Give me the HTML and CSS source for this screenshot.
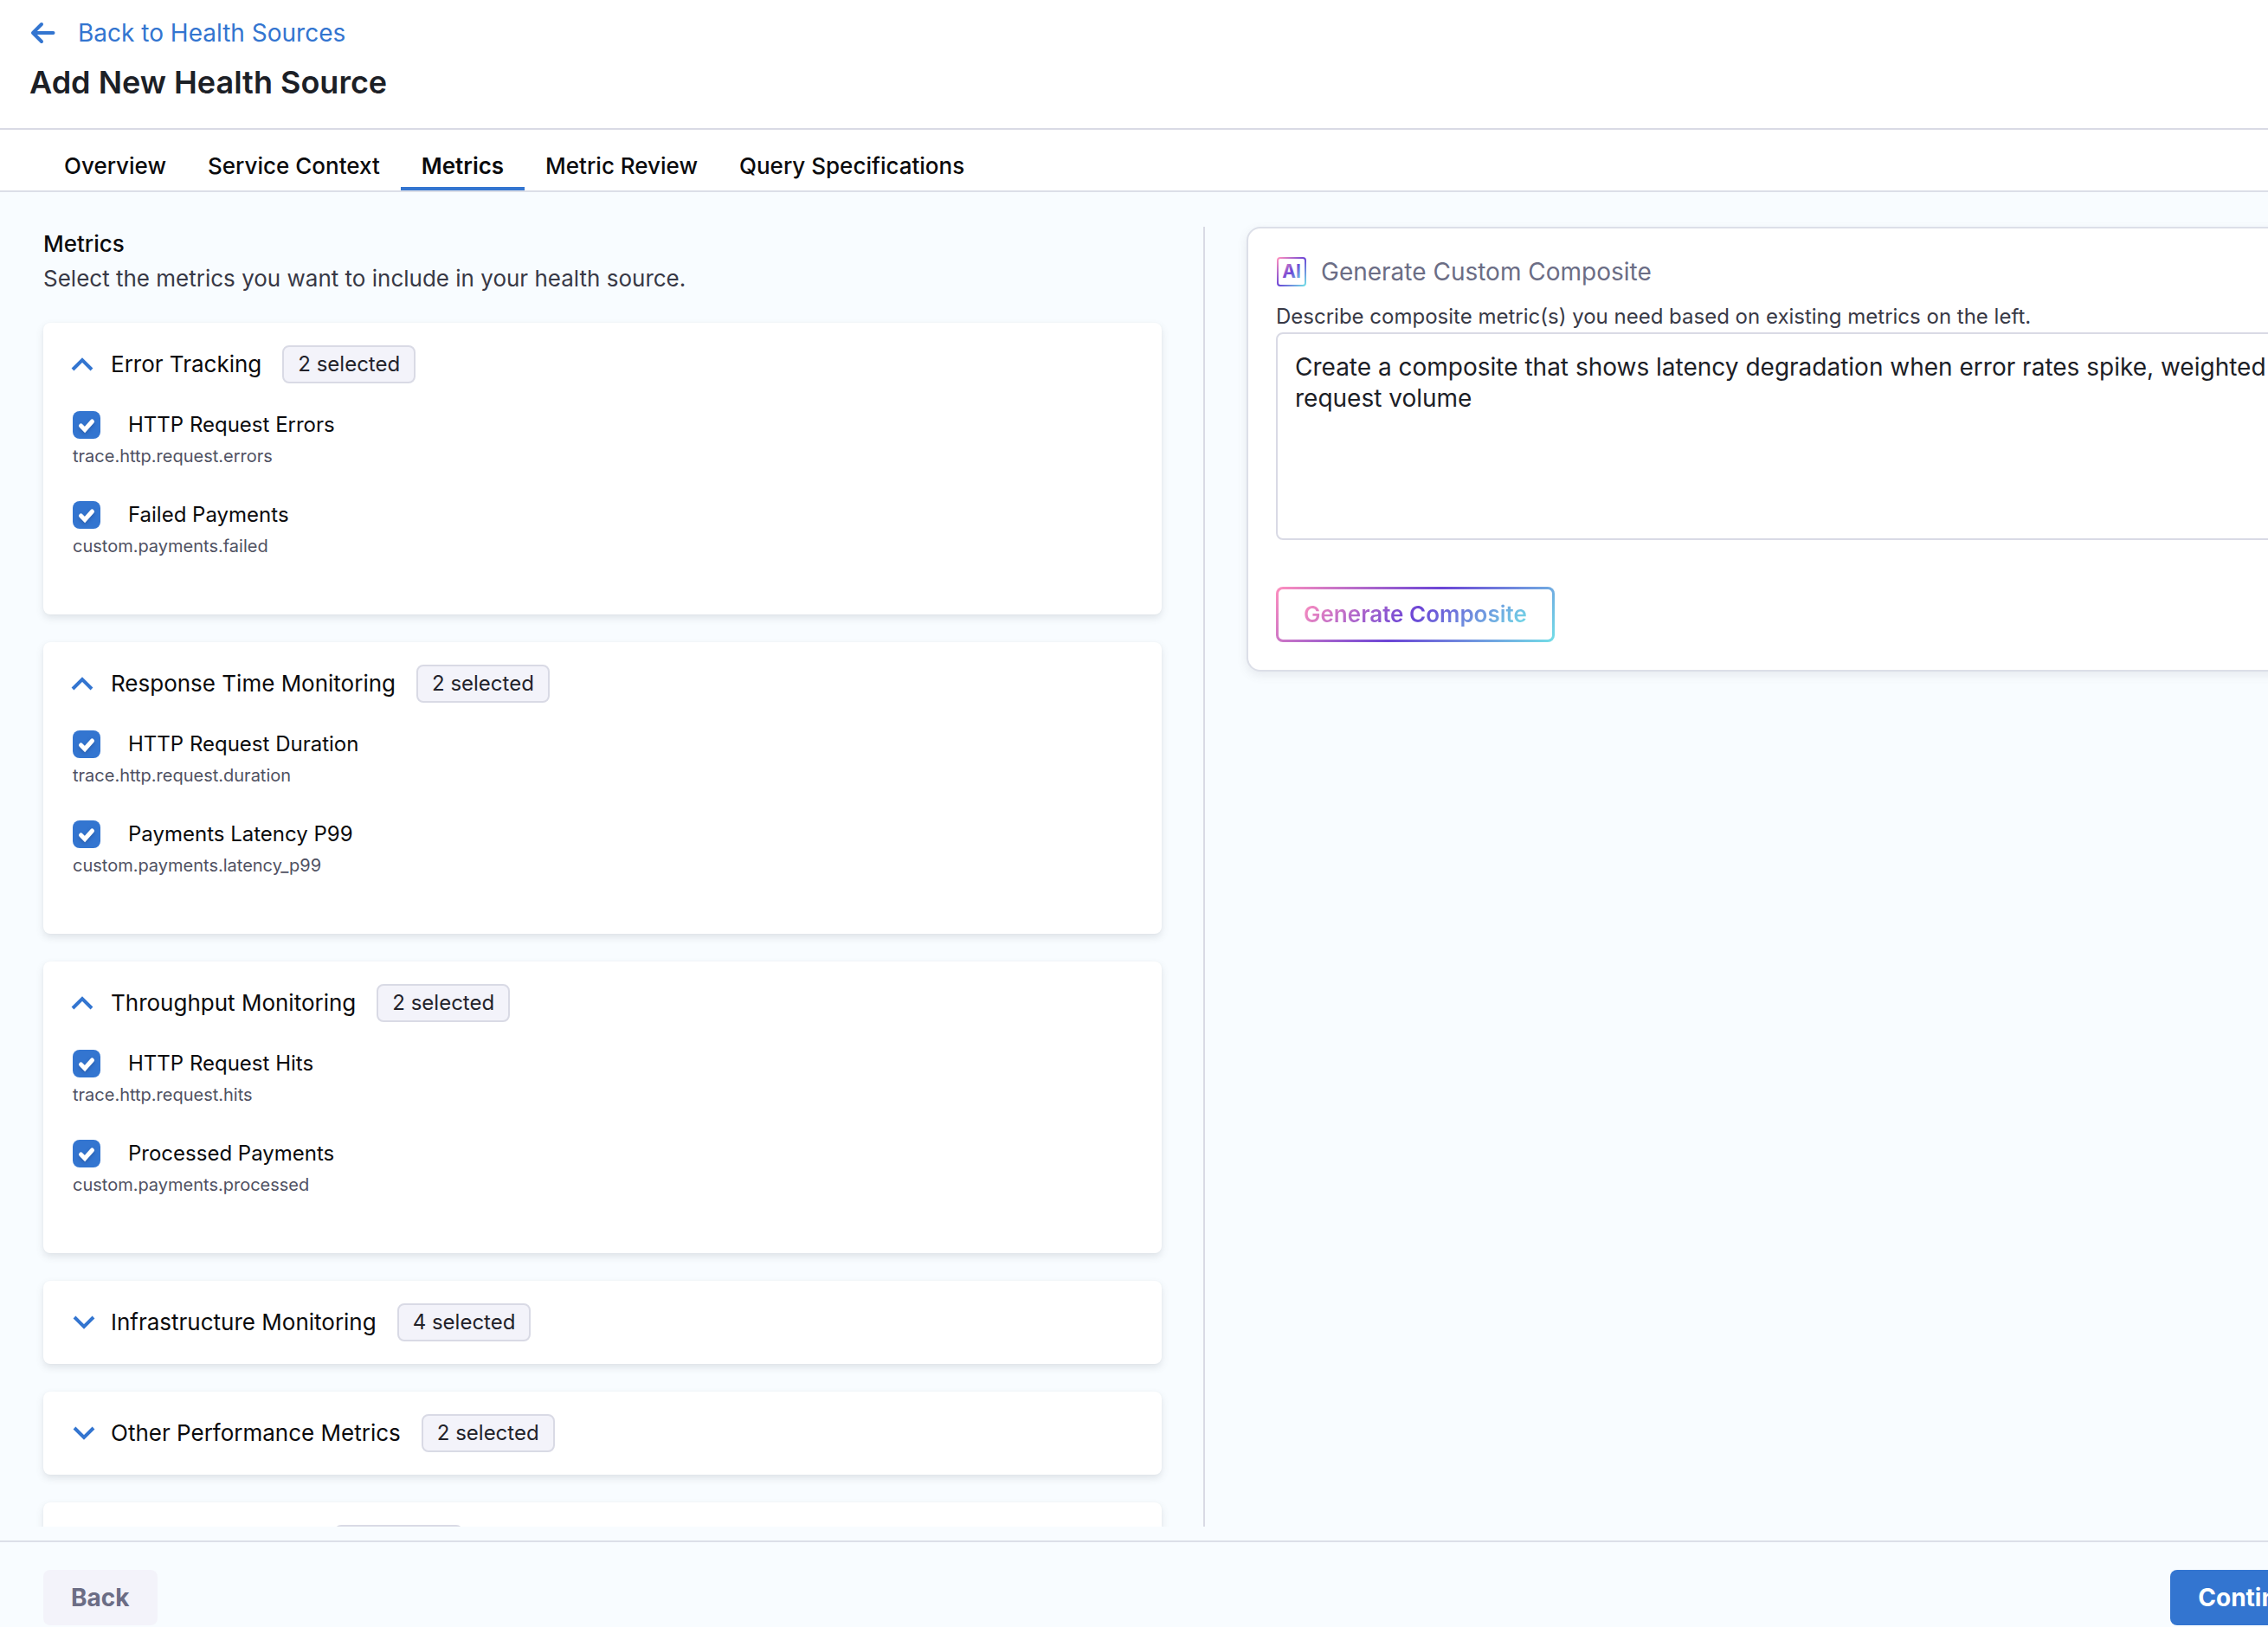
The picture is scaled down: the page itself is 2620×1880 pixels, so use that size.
FILE: index.html
```html
<!DOCTYPE html>
<html lang="en">
<head>
  <meta charset="UTF-8" />
  <meta name="viewport" content="width=device-width, initial-scale=1.0" />
  <title>Add New Health Source</title>
  <link rel="stylesheet" href="styles.css">
</head>
<body>
  <div class="page">

    <header class="page-header">
      <a class="back-link" href="#">
        <svg width="32" height="32" viewBox="0 0 32 32" fill="none" stroke="currentColor" stroke-width="4" stroke-linecap="round" stroke-linejoin="round" aria-hidden="true">
          <path d="M27.5 16H4.5M14 6L4 16L14 26" />
        </svg>
        Back to Health Sources
      </a>
      <h1>Add New Health Source</h1>
    </header>

    <nav class="tabs">
      <button class="tab" type="button">Overview</button>
      <button class="tab" type="button">Service Context</button>
      <button class="tab active" type="button">Metrics</button>
      <button class="tab" type="button">Metric Review</button>
      <button class="tab" type="button">Query Specifications</button>
    </nav>

    <main class="content">
      <section class="metrics">
        <h2>Metrics</h2>
        <p class="intro">Select the metrics you want to include in your health source.</p>

        <div class="cards">
          <div class="card">
            <button class="card-header" type="button" aria-expanded="true">
              <svg class="chevron" viewBox="0 0 28 28" aria-hidden="true"><path d="M0 20L11 9L22 20" /></svg>
              <span class="card-title">Error Tracking</span>
              <span class="badge">2 selected</span>
            </button>
            <div class="metric-list">
              <div class="metric">
                <label class="metric-label">
                  <span class="check">
                    <input type="checkbox" checked>
                    <svg viewBox="0 0 32 32" aria-hidden="true"><path d="M9.5 17L14 21.5L22.5 12" /></svg>
                  </span>
                  HTTP Request Errors
                </label>
                <div class="metric-key">trace.http.request.errors</div>
              </div>
              <div class="metric">
                <label class="metric-label">
                  <span class="check">
                    <input type="checkbox" checked>
                    <svg viewBox="0 0 32 32" aria-hidden="true"><path d="M9.5 17L14 21.5L22.5 12" /></svg>
                  </span>
                  Failed Payments
                </label>
                <div class="metric-key">custom.payments.failed</div>
              </div>
            </div>
          </div>

          <div class="card">
            <button class="card-header" type="button" aria-expanded="true">
              <svg class="chevron" viewBox="0 0 28 28" aria-hidden="true"><path d="M0 20L11 9L22 20" /></svg>
              <span class="card-title">Response Time Monitoring</span>
              <span class="badge">2 selected</span>
            </button>
            <div class="metric-list">
              <div class="metric">
                <label class="metric-label">
                  <span class="check">
                    <input type="checkbox" checked>
                    <svg viewBox="0 0 32 32" aria-hidden="true"><path d="M9.5 17L14 21.5L22.5 12" /></svg>
                  </span>
                  HTTP Request Duration
                </label>
                <div class="metric-key">trace.http.request.duration</div>
              </div>
              <div class="metric">
                <label class="metric-label">
                  <span class="check">
                    <input type="checkbox" checked>
                    <svg viewBox="0 0 32 32" aria-hidden="true"><path d="M9.5 17L14 21.5L22.5 12" /></svg>
                  </span>
                  Payments Latency P99
                </label>
                <div class="metric-key">custom.payments.latency_p99</div>
              </div>
            </div>
          </div>

          <div class="card">
            <button class="card-header" type="button" aria-expanded="true">
              <svg class="chevron" viewBox="0 0 28 28" aria-hidden="true"><path d="M0 20L11 9L22 20" /></svg>
              <span class="card-title">Throughput Monitoring</span>
              <span class="badge">2 selected</span>
            </button>
            <div class="metric-list">
              <div class="metric">
                <label class="metric-label">
                  <span class="check">
                    <input type="checkbox" checked>
                    <svg viewBox="0 0 32 32" aria-hidden="true"><path d="M9.5 17L14 21.5L22.5 12" /></svg>
                  </span>
                  HTTP Request Hits
                </label>
                <div class="metric-key">trace.http.request.hits</div>
              </div>
              <div class="metric">
                <label class="metric-label">
                  <span class="check">
                    <input type="checkbox" checked>
                    <svg viewBox="0 0 32 32" aria-hidden="true"><path d="M9.5 17L14 21.5L22.5 12" /></svg>
                  </span>
                  Processed Payments
                </label>
                <div class="metric-key">custom.payments.processed</div>
              </div>
            </div>
          </div>

          <div class="card">
            <button class="card-header" type="button" aria-expanded="false">
              <svg class="chevron" viewBox="0 0 28 28" aria-hidden="true"><path d="M2 8L13 19L24 8" /></svg>
              <span class="card-title">Infrastructure Monitoring</span>
              <span class="badge">4 selected</span>
            </button>
          </div>

          <div class="card">
            <button class="card-header" type="button" aria-expanded="false">
              <svg class="chevron" viewBox="0 0 28 28" aria-hidden="true"><path d="M2 8L13 19L24 8" /></svg>
              <span class="card-title">Other Performance Metrics</span>
              <span class="badge">2 selected</span>
            </button>
          </div>

          <div class="card">
            <button class="card-header" type="button" aria-expanded="false">
              <svg class="chevron" viewBox="0 0 28 28" aria-hidden="true"><path d="M2 8L13 19L24 8" /></svg>
              <span class="card-title">Custom Composite</span>
              <span class="badge">1 selected</span>
            </button>
          </div>
        </div>
      </section>

      <section class="composite">
        <div class="composite-card">
          <div class="composite-title">
            <svg width="36" height="36" viewBox="0 0 36 36" aria-hidden="true">
              <defs>
                <linearGradient id="ai" x1="0" y1="0" x2="1" y2="1">
                  <stop offset="0" stop-color="#ff8fbe" />
                  <stop offset="0.5" stop-color="#6b45d6" />
                  <stop offset="1" stop-color="#73dfe7" />
                </linearGradient>
              </defs>
              <rect x="2" y="2" width="32" height="32" rx="3" fill="none" stroke="url(#ai)" stroke-width="2" />
              <text class="ai-text" x="18" y="25" text-anchor="middle" fill="url(#ai)">AI</text>
            </svg>
            <h2>Generate Custom Composite</h2>
          </div>
          <label class="prompt-label" for="prompt">Describe composite metric(s) you need based on existing metrics on the left.</label>
          <textarea class="prompt" id="prompt">Create a composite that shows latency degradation when error rates spike, weighted by request volume</textarea>
          <button class="generate" type="button"><span>Generate Composite</span></button>
        </div>
      </section>
    </main>

    <footer class="page-footer">
      <button class="btn btn-back" type="button">Back</button>
      <button class="btn btn-continue" type="button">Continue</button>
    </footer>

  </div>
</body>
</html>
```

FILE: styles.css
```css
* {
  box-sizing: border-box;
}
body {
  margin: 0;
  height: 100vh;
  overflow: hidden;
  background: #f8fcff;
  color: #0b0b0d;
  font-family: Inter, "Liberation Sans", sans-serif;
}
h1, h2, p {
  margin: 0;
}
button {
  font-family: inherit;
  color: inherit;
  cursor: pointer;
}
.page {
  display: flex;
  flex-direction: column;
  width: calc(100vw + 160px);
  height: 100vh;
}

/* header and tabs */
.page-header {
  padding: 20px 34px 30px;
  background: #fff;
  border-bottom: 2px solid #d9dae5;
}
.back-link {
  display: flex;
  align-items: center;
  gap: 24px;
  color: #3375d0;
  font-size: 28px;
  line-height: 36px;
  text-decoration: none;
}
h1 {
  margin-top: 16px;
  color: #1c2026;
  font-size: 36px;
  font-weight: 600;
  line-height: 46px;
}
.tabs {
  display: flex;
  padding: 0 50px;
  background: #fff;
  border-bottom: 2px solid #dcdfe8;
}
.tab {
  padding: 26px 24px 8px;
  background: none;
  border: none;
  border-bottom: 4px solid transparent;
  font-size: 26px;
  font-weight: 500;
  line-height: 32px;
}
.tab.active {
  border-bottom-color: #3375d0;
  font-weight: 600;
}

/* columns */
.content {
  display: grid;
  grid-template-columns: 1fr 1fr;
  flex: 1;
  min-height: 0;
  margin-bottom: 16px;
  padding: 40px 50px 0;
  overflow: hidden;
}
.metrics {
  min-height: 0;
  padding-right: 48px;
}
.metrics h2 {
  font-size: 26px;
  font-weight: 500;
  line-height: 40px;
}
.intro {
  color: #383946;
  font-size: 26px;
  line-height: 40px;
}
.cards {
  display: flex;
  flex-direction: column;
  gap: 32px;
  margin-top: 31px;
}
.card {
  padding: 26px 34px;
  background: #fff;
  border-radius: 8px;
  box-shadow: 0 0 2px rgba(40, 41, 61, 0.04), 0 4px 8px rgba(96, 97, 112, 0.16);
}
.card-header {
  display: flex;
  align-items: center;
  width: 100%;
  padding: 0;
  background: none;
  border: none;
  font-size: 26px;
  line-height: 44px;
}
.chevron {
  width: 28px;
  height: 28px;
  margin-right: 16px;
  overflow: visible;
  fill: none;
  stroke: #3375d0;
  stroke-width: 4;
}
.badge {
  margin-left: 24px;
  padding: 0 16px;
  background: #f3f3fa;
  border: 2px solid #d9dae5;
  border-radius: 8px;
  color: #22222a;
  font-size: 24px;
  line-height: 40px;
}
.metric-list {
  display: flex;
  flex-direction: column;
  gap: 38px;
  padding: 32px 0 39px;
}
.metric-label {
  display: flex;
  align-items: center;
  gap: 32px;
  font-size: 24px;
  line-height: 32px;
}
.check {
  display: grid;
  width: 32px;
  height: 32px;
}
.check input,
.check svg {
  grid-area: 1 / 1;
  width: 32px;
  height: 32px;
  margin: 0;
}
.check input {
  appearance: none;
  background: #3375d0;
  border-radius: 8px;
}
.check svg {
  fill: none;
  stroke: #fff;
  stroke-width: 5;
  stroke-linecap: round;
  pointer-events: none;
  filter: drop-shadow(0 2px 2px rgba(20, 40, 90, 0.3));
}
.metric-key {
  margin-top: 6px;
  color: #4f5162;
  font-size: 20px;
  line-height: 28px;
}

/* composite panel */
.composite {
  padding-left: 48px;
  border-left: 2px solid #d9dae5;
}
.composite-card {
  padding: 32px;
  background: #fff;
  border: 2px solid #dcdfe8;
  border-radius: 16px;
  box-shadow: 0 4px 12px rgba(96, 97, 112, 0.12);
}
.composite-title {
  display: flex;
  align-items: center;
  gap: 16px;
}
.composite-title h2 {
  color: #6b6d85;
  font-size: 28px;
  font-weight: 400;
  line-height: 36px;
}
.ai-text {
  font-size: 21px;
  font-weight: 700;
}
.prompt-label {
  display: block;
  margin-top: 16px;
  color: #383946;
  font-size: 24px;
  line-height: 36px;
}
.prompt {
  display: block;
  width: 100%;
  height: 240px;
  padding: 20px;
  background: #fff;
  border: 2px solid #d9dae5;
  border-radius: 8px;
  color: #1c2026;
  font-family: inherit;
  font-size: 28px;
  line-height: 36px;
  resize: none;
}
.generate {
  margin-top: 54px;
  padding: 0 29px;
  background: linear-gradient(#fff, #fff) padding-box, linear-gradient(135deg, #ff8fbe, #6b45d6 50%, #73dfe7) border-box;
  border: 3px solid transparent;
  border-radius: 8px;
  font-size: 26px;
  font-weight: 600;
  line-height: 58px;
}
.generate span {
  background: linear-gradient(135deg, #ff8fbe, #6b45d6 50%, #73dfe7);
  background-clip: text;
  color: transparent;
}

/* footer */
.page-footer {
  display: flex;
  justify-content: space-between;
  padding: 32px 84px 2px 50px;
  border-top: 2px solid #dcdfe8;
}
.btn {
  padding: 0 32px;
  border: none;
  border-radius: 8px;
  font-size: 28px;
  font-weight: 700;
  line-height: 64px;
}
.btn-back {
  background: #f3f3fa;
  color: #6b6d85;
}
.btn-continue {
  background: #3375d0;
  color: #fff;
}
```
